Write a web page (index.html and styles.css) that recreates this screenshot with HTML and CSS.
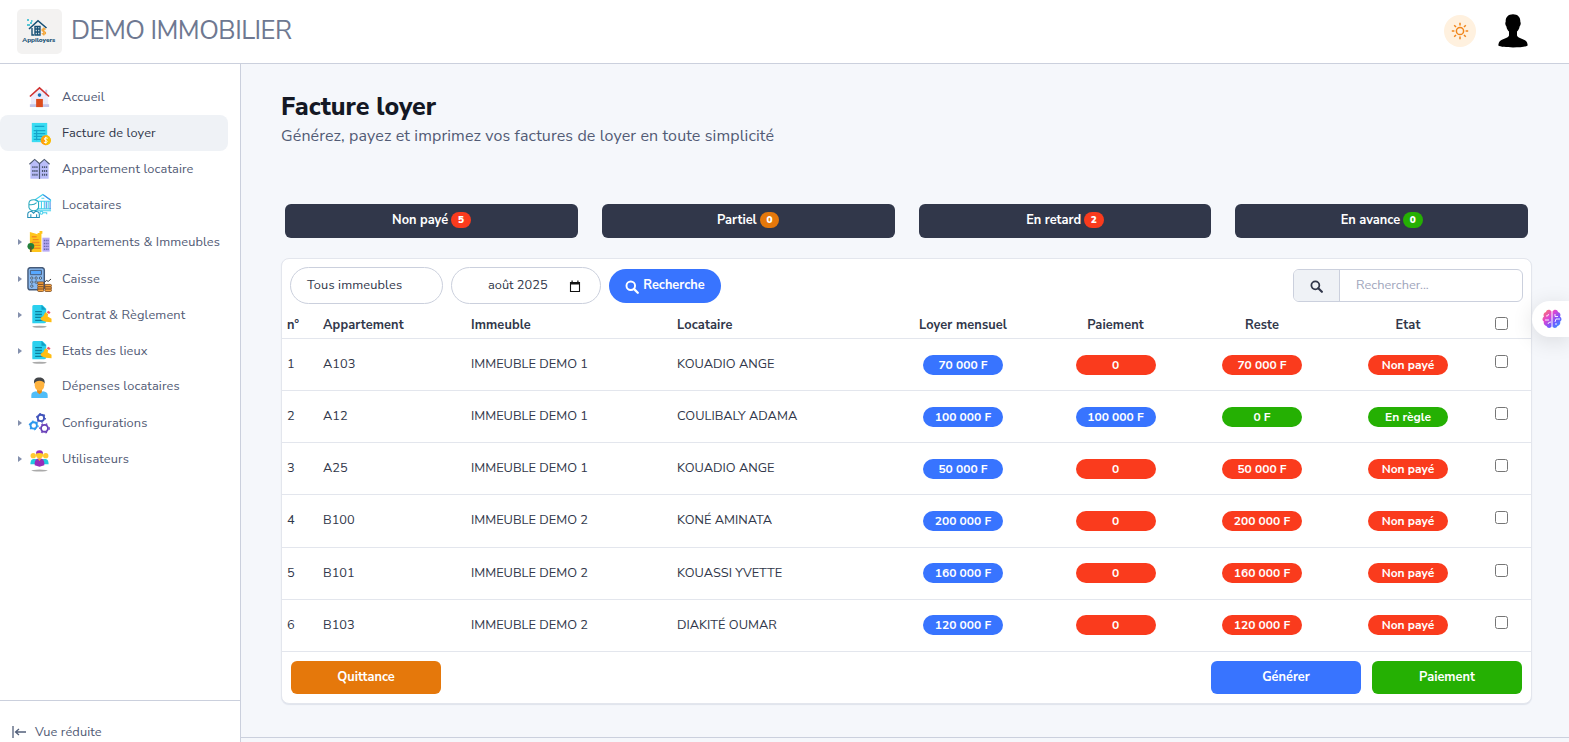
FILE: index.html
```
<!DOCTYPE html>
<html lang="fr">
<head>
<meta charset="utf-8">
<title>Facture loyer</title>
<link rel="stylesheet" href="styles.css">
</head>
<body>
<svg class="defs" width="0" height="0">
  <symbol id="search" viewBox="0 0 16 16"><circle cx="6.6" cy="6.6" r="4.9" fill="none" stroke="currentColor" stroke-width="2.2"/><path d="M10.2 10.2 14.6 14.6" stroke="currentColor" stroke-width="2.6" stroke-linecap="round"/></symbol>
  <symbol id="contract" viewBox="0 0 26 26"><ellipse cx="13" cy="24.7" rx="7.500" ry="1" fill="#aaa"/><path d="M7 2h9l4 4v13q0 2-2 2H5.500V4q0-2 1.500-2z" fill="#2bd0ee"/><path d="M15 2l5 5h-5z" fill="#139fc4"/><path d="M8.500 9h7M8.500 12h7M8.500 15h7M8.500 18h10" stroke="#0c7f9f" stroke-width="1.400"/><path d="m22 8 2.500 1.500-1.500 2-2.500-1.500z" fill="#f05268"/><path d="m19 9.500 3 2-.5 2.500 4 2.500v3.500l-6-.5-4.500-1.500-1-2.500 3-2z" fill="#ffbd13"/></symbol>
</svg>
<header class="topbar">
  <svg class="logo" viewBox="0 0 45 45"><rect width="45" height="45" rx="5" fill="#f3f2f1"/><path d="m12 20 9-8.300 8.500 7.300" fill="none" stroke="#165075" stroke-width="1.600"/><path d="M15 19v7h2m1-8.500V26h5v-8.500zM18 20h5m-5 3h5m-2.500-5.500V26" fill="none" stroke="#165075" stroke-width="1.400"/><path d="M10 11h2M14 12h1.500M10 16h3M13 14h2" stroke="#22b7cb" stroke-width="1.600"/><path d="M28.500 20.500c-.8-1.200-3.500-1-3.500.5 0 1.800 3.600 1 3.600 3 0 1.500-2.800 1.700-3.700.3M26.800 18.500v8" fill="none" stroke="#f3a02d" stroke-width="1.200"/><text x="5.300" y="33.300" class="logo-name" textLength="33">Appiloyers</text></svg>
  <span class="brand">DEMO IMMOBILIER</span>
  <button class="theme"><svg width="18" height="18" viewBox="0 0 18 18" fill="none" stroke="#f0861c" stroke-width="1.500"><circle cx="9" cy="9" r="3.600"/><path d="M9 .8v2.600M9 14.600v2.600M.8 9h2.600M14.600 9h2.600M3.200 3.200l1.800 1.800M13 13l1.800 1.800M3.200 14.800 5 13M13 5l1.800-1.800"/></svg></button>
  <svg class="avatar" viewBox="0 0 30 34"><path d="M15 .3C10 .3 7.300 3.500 7.700 8c-.8.500-.5 3 .7 4.500.4 2.500 1.500 4 2.600 5v4c-1.200 2.600-5.500 3.400-8 4.700C1 27.200.5 29.500.3 31.500 4 34 26 34 29.700 31.500c-.2-2-.7-4.300-2.700-5.300-2.500-1.300-6.800-2.100-8-4.700v-4c1.100-1 2.200-2.500 2.600-5 1.200-1.500 1.500-4 .7-4.500.4-4.500-2.300-7.700-7.300-7.700z"/></svg>
</header>
<div class="shell">
<aside class="sidebar">
  <nav class="nav">
    <a class="item"><i class="no-caret"></i><svg viewBox="0 0 26 26"><path d="M4 12 13 4l9 8v10H4z" fill="#ecebfa"/><path d="M19 5h2v6h-2zM3 20h20v3H3z" fill="#c4c4e8"/><path d="m3 12 10-9 10 9" fill="none" stroke="#cf3030" stroke-width="1.600"/><circle cx="13" cy="10.500" r="1.900" fill="#1870b8"/><path d="M9.500 14.500h7V23h-7z" fill="#dc4b1c"/></svg><span>Accueil</span></a>
    <a class="item active"><i class="no-caret"></i><svg viewBox="0 0 26 26"><path d="M5 2h16v20H5z" fill="#3bdcf2"/><path d="M8 5.500h10M7 10h12M7 13h12M7 16h9M7 19h8M10 9v11" stroke="#14a5cc" stroke-width="1.300"/><circle cx="19.500" cy="20" r="5.300" fill="#ff9e0b"/><path d="M19.500 14.700a5.300 5.300 0 0 1 0 10.600z" fill="#f8c100"/><path d="M21.500 18c-3-1.600-5 1-2 2s1 3.400-2 2M19.500 16.500v7" fill="none" stroke="#fff" stroke-width="1"/></svg><span>Facture de loyer</span></a>
    <a class="item"><i class="no-caret"></i><svg viewBox="0 0 26 26"><path d="M3.500 7 8 3l5 4 5-4 4.500 4v15.500h-19z" fill="#b9bdf9"/><path d="m2.500 7.500 5.500-5 5 4.500 5-4.500 5.500 5M13 7v16" fill="none" stroke="#4c5872" stroke-width="1.200"/><path d="M5.500 10.500H11m4.500 0H21M5.500 14.500H11m4.500 0H21M5.500 18.500H11m4.500 0H21" stroke="#4c5872" stroke-width="2" stroke-dasharray="1.300 .8"/></svg><span>Appartement locataire</span></a>
    <a class="item"><i class="no-caret"></i><svg viewBox="0 0 26 26" fill="none" stroke="#44cfec" stroke-width="1.100"><path d="m8.500 7 8-5.500 8 5.500v1.500h-14zM12 9v7m3-7v7m3-7v7m4-7v7M11 16.500h14M15 5.500h3M9 18.500h16"/><path d="M20 9v7m4-7v8M17 2l7 5" stroke="#418ce8"/><path d="M2 11q0-4 5-4t5 4v4q-1 3.500-5 3.500T2 15zM2 12q5 1 8-2" stroke="#29a9bd"/><path d="M.8 25.500V22q0-2.500 4-3l2 2 2-2q4 .5 4 3v3.500zM4 22v3m6-3v3" stroke="#238fb7"/><circle cx="15" cy="20.500" r="1.500"/><path d="M16.500 20.500h4v1.500"/></svg><span>Locataires</span></a>
    <a class="item tall"><i class="caret"></i><svg viewBox="0 0 26 26"><path d="m3 2 8 2.500V3h2V1h3v3h-1v19H3z" fill="#ffc51c"/><path d="M5 7h5M6 10h6M5 13h8M6 16h8M6 19h8" stroke="#f28c1e" stroke-width="1.400"/><path d="M16 8h7.500v14.500H16z" fill="#b7aaf3"/><path d="M17.500 11h5m-5 3h5m-5 3h5m-5 3h5" stroke="#6465ac" stroke-width="1.500" stroke-dasharray="1.200 .7"/><circle cx="4" cy="17" r="3.500" fill="#24803b"/><path d="M4 17v6" stroke="#694d28" stroke-width="1.500"/></svg><span class="wide-label">Appartements &amp; Immeubles</span></a>
    <a class="item"><i class="caret"></i><svg viewBox="0 0 26 26"><rect x="1" y=".7" width="17" height="23" rx="2.500" fill="#8abaf0" stroke="#465a78" stroke-width="1.500"/><path d="M3.500 3.500H15v4.500H3.500z" fill="#57a8ff" stroke="#465a78"/><g fill="#d7edff" stroke="#33475f" stroke-width=".9"><circle cx="5" cy="11.500" r="1.200"/><circle cx="9.500" cy="11.500" r="1.200"/><circle cx="14" cy="11.500" r="1.200"/><circle cx="5" cy="15.700" r="1.200"/><circle cx="9.500" cy="15.700" r="1.200"/><circle cx="5" cy="19.900" r="1.200"/></g><g fill="#f6a23c" stroke="#70411c" stroke-width=".8"><rect x="11" y="15.500" width="6.500" height="2.600" rx="1.200"/><rect x="11" y="18.100" width="6.500" height="2.500" rx="1.200"/><rect x="11" y="20.600" width="6.500" height="2.500" rx="1.200"/><rect x="11" y="23" width="6.500" height="2.500" rx="1.200"/><rect x="18.500" y="18.100" width="7" height="2.500" rx="1.200"/><rect x="18.500" y="20.600" width="7" height="2.500" rx="1.200"/><rect x="18.500" y="23" width="7" height="2.500" rx="1.200"/></g><path d="m18.500 15.500 2-1.500 1.500 1 3-2.500" fill="none" stroke="#333"/></svg><span>Caisse</span></a>
    <a class="item"><i class="caret"></i><svg viewBox="0 0 26 26"><use href="#contract"/></svg><span>Contrat &amp; Règlement</span></a>
    <a class="item"><i class="caret"></i><svg viewBox="0 0 26 26"><use href="#contract"/></svg><span>Etats des lieux</span></a>
    <a class="item short"><i class="no-caret"></i><svg viewBox="0 0 26 26"><path d="M4.500 24v-3q0-3.500 5-4l3.500 2 3.500-2q5 .5 5 4v3z" fill="#50bdf8"/><path d="M10.500 14h5v4L13 20l-2.500-2z" fill="#e58a12"/><path d="M8 8q0-5 5-5t5 5v3q-.5 5-5 5.500Q8.500 16 8 11z" fill="#ffb33e"/><path d="M7.500 9C6.500 4.500 9 2.500 13 2.500S19 5 18.300 9Q17 6 13 6T7.500 9z" fill="#424549"/></svg><span>Dépenses locataires</span></a>
    <a class="item tall config"><i class="caret"></i><svg viewBox="0 0 26 26" fill="none"><g stroke-width="1.900"><circle cx="14.500" cy="7.200" r="3.300" stroke="#4254bb"/><circle cx="7" cy="15" r="3.300" stroke="#2a96ee"/><circle cx="18.200" cy="18" r="3.600" stroke="#6940b8"/></g><g stroke-width="1.300" stroke-dasharray="1.700 3.080"><circle cx="14.500" cy="7.200" r="4.560" stroke="#4254bb"/><circle cx="7" cy="15" r="4.560" stroke="#2a96ee"/><circle cx="18.200" cy="18" r="4.900" stroke="#6940b8"/></g></svg><span>Configurations</span></a>
    <a class="item"><i class="caret"></i><svg viewBox="0 0 26 26"><ellipse cx="13" cy="24.500" rx="8.500" ry="1" fill="#aaa"/><circle cx="6.500" cy="9" r="2.800" fill="#ffca32"/><circle cx="19.500" cy="9" r="2.800" fill="#ffca32"/><path d="M3.500 18q0-5 3-5.500h13q3 .5 3 5.500z" fill="#23c8df"/><circle cx="13" cy="8" r="3.700" fill="#ffc928"/><path d="M9.300 7q0-3.500 3.700-3.500T16.700 7q-3.700-1.500-7.400 0z" fill="#942fc0"/><path d="M8 19v-2q0-5 5-5t5 5v2l-5 1.500z" fill="#972bb9"/><path d="m11 12 2 2.500 2-2.500z" fill="#ffad24"/></svg><span>Utilisateurs</span></a>
  </nav>
  <div class="collapse"><svg width="15" height="12" viewBox="0 0 15 12" fill="none" stroke="#53607b" stroke-width="1.300"><path d="M1 0v12M3.500 6H14M7 3 3.500 6 7 9"/></svg><span>Vue réduite</span></div>
</aside>
<main class="main">
  <h1>Facture loyer</h1>
  <p class="subtitle">Générez, payez et imprimez vos factures de loyer en toute simplicité</p>
  <section class="stats">
    <div class="stat"><span>Non payé</span><b class="red">5</b></div>
    <div class="stat"><span>Partiel</span><b class="orange">0</b></div>
    <div class="stat"><span>En retard</span><b class="red">2</b></div>
    <div class="stat"><span>En avance</span><b class="green">0</b></div>
  </section>
  <section class="card">
    <div class="filters">
      <div class="select">Tous immeubles</div>
      <div class="month"><span>août 2025</span><svg width="12" height="13" viewBox="0 0 12 13"><path d="M1.500 2.500h9v9h-9z" fill="none" stroke="#111" stroke-width="1.100"/><path d="M1 2h10v2.500H1zM2.500.5h1.200V3H2.500zm5.800 0h1.200V3H8.300z" fill="#111"/></svg></div>
      <button class="find"><svg width="14" height="14"><use href="#search"/></svg><span>Recherche</span></button>
      <div class="search"><span class="addon"><svg width="13" height="13"><use href="#search"/></svg></span><span class="placeholder">Rechercher...</span></div>
    </div>
    <div class="row head"><span>n°</span><span>Appartement</span><span>Immeuble</span><span>Locataire</span><span class="mid">Loyer mensuel</span><span class="mid">Paiement</span><span class="mid">Reste</span><span class="mid">Etat</span><input type="checkbox"></div>
    <div class="row"><span>1</span><span>A103</span><span>IMMEUBLE DEMO 1</span><span>KOUADIO ANGE</span><b class="pill blue">70 000 F</b><b class="pill red">0</b><b class="pill red">70 000 F</b><b class="pill red">Non payé</b><input type="checkbox"></div>
    <div class="row"><span>2</span><span>A12</span><span>IMMEUBLE DEMO 1</span><span>COULIBALY ADAMA</span><b class="pill blue">100 000 F</b><b class="pill blue">100 000 F</b><b class="pill green">0 F</b><b class="pill green">En règle</b><input type="checkbox"></div>
    <div class="row"><span>3</span><span>A25</span><span>IMMEUBLE DEMO 1</span><span>KOUADIO ANGE</span><b class="pill blue">50 000 F</b><b class="pill red">0</b><b class="pill red">50 000 F</b><b class="pill red">Non payé</b><input type="checkbox"></div>
    <div class="row"><span>4</span><span>B100</span><span>IMMEUBLE DEMO 2</span><span>KONÉ AMINATA</span><b class="pill blue">200 000 F</b><b class="pill red">0</b><b class="pill red">200 000 F</b><b class="pill red">Non payé</b><input type="checkbox"></div>
    <div class="row"><span>5</span><span>B101</span><span>IMMEUBLE DEMO 2</span><span>KOUASSI YVETTE</span><b class="pill blue">160 000 F</b><b class="pill red">0</b><b class="pill red">160 000 F</b><b class="pill red">Non payé</b><input type="checkbox"></div>
    <div class="row"><span>6</span><span>B103</span><span>IMMEUBLE DEMO 2</span><span>DIAKITÉ OUMAR</span><b class="pill blue">120 000 F</b><b class="pill red">0</b><b class="pill red">120 000 F</b><b class="pill red">Non payé</b><input type="checkbox"></div>
    <div class="actions"><button class="orange first">Quittance</button><button class="blue">Générer</button><button class="green">Paiement</button></div>
  </section>
  <footer class="page-end"></footer>
</main>
</div>
<div class="assistant"><svg width="20" height="20" viewBox="0 0 20 20"><defs><linearGradient id="brain" x1="0" y1="0" x2="1" y2="1"><stop offset="0" stop-color="#ff8052"/><stop offset=".35" stop-color="#e246cf"/><stop offset=".65" stop-color="#7557ff"/><stop offset="1" stop-color="#27a6ff"/></linearGradient></defs><path d="M9.500 2.500C8 0 4.500.5 4 3 1.500 3.500 1 6 2 7.500 0 9 0 11.500 1.800 12.500c-.6 2.500 1 4.300 2.700 4.500.8 2.400 4 2.600 5 .5zM10.500 2.500C12 0 15.500.5 16 3c2.500.5 3 3 2 4.500 2 1.500 2 4 .2 5 .6 2.500-1 4.300-2.700 4.500-.8 2.400-4 2.600-5 .5z" fill="url(#brain)"/><path d="M4 7q2.500.5 2.500-2M3 11h4M6 15q0-2 3-2M13 5v2.500h3M18 10h-4l-1 3M14 16v-2" fill="none" stroke="#fff" stroke-width=".9"/></svg></div>
</body>
</html>
```
FILE: styles.css
```
* { box-sizing: border-box; }
body { margin: 0; height: 742px; overflow: hidden; font-family: "Nunito Sans", Lato, sans-serif; font-size: 12.8px; color: #31374a; background: #f5f7fb; }
button { font: inherit; border: 0; padding: 0; }
.defs { display: block; position: absolute; }
.topbar { height: 64px; background: #fff; border-bottom: 1px solid #cbd0dd; display: flex; align-items: center; padding: 0 41px 0 17px; }
.logo { width: 45px; height: 45px; }
.logo-name { font-size: 6.500px; font-weight: 800; fill: #165075; }
.brand { margin: -3px auto 0 9px; font-size: 25.600px; letter-spacing: -.51px; color: #6e7891; }
.theme { width: 32px; height: 32px; margin: -1px 22px 0 0; border-radius: 50%; background: #fff1df; display: grid; place-items: center; }
.avatar { width: 30px; height: 34px; margin-top: -2px; }
.shell { display: flex; height: 678px; }
.sidebar { flex: none; width: 241px; background: #fff; border-right: 1px solid #cbd0dd; display: flex; flex-direction: column; justify-content: space-between; }
.nav { padding-top: 15px; }
.item { display: flex; align-items: center; height: 36px; width: 228px; padding-left: 18px; border-radius: 8px; color: #525b75; white-space: nowrap; letter-spacing: .12px; }
.item svg { width: 25px; height: 25px; margin: 1px 10px 0 0; }
.item.tall { height: 38px; }
.item.tall svg { margin-right: 4px; }
.item .wide-label { letter-spacing: .1px; }
.item.config { height: 37px; }
.item.config svg { margin-right: 10px; }
.item.short { height: 35px; }
.item.short span { margin-top: -1px; }
.active { background: #eff2f6; color: #31374a; }
.no-caret, .caret { width: 9px; }
.caret::before { content: ""; display: block; width: 0; border: 3.500px solid transparent; border-left: 4px solid #8490ad; border-right: 0; }
.collapse { height: 42px; border-top: 1px solid #cbd0dd; padding: 21px 0 0 12px; display: flex; align-items: center; gap: 8px; color: #525b75; letter-spacing: .1px; }
.main { flex: 1; min-width: 0; padding: 27px 37px 0 40px; display: flex; flex-direction: column; }
h1 { margin: 0; font-size: 25px; line-height: 32px; font-weight: 800; color: #141824; }
.subtitle { margin: 0; font-size: 16px; line-height: 27px; letter-spacing: .125px; color: #525b75; }
.stats { display: grid; grid-template-columns: repeat(4, 1fr); gap: 24px; margin: 54px 4px 20px 4px; }
.stat { height: 34px; border-radius: 6px; background: #31374a; color: #fff; font-weight: 700; display: flex; justify-content: center; align-items: center; gap: 3px; padding-bottom: 3px; }
.stat b { font-size: 10px; line-height: 16px; width: 19.500px; border-radius: 9px; text-align: center; }
.red { background: #fa3b1d; }
.orange { background: #e5780b; }
.green { background: #25b003; }
.blue { background: #3874ff; }
.card { height: 446px; background: #fff; border: 1px solid #e3e6ed; border-radius: 8px; box-shadow: 0 1px 1px #dfe3ec; }
.filters { height: 54px; padding: 0 8px; display: flex; align-items: center; gap: 8px; }
.select, .month { height: 37px; margin-top: -2px; border: 1px solid #cbd0dd; border-radius: 19px; display: flex; align-items: center; padding-bottom: 1px; }
.select { width: 153px; padding-left: 16px; letter-spacing: .12px; }
.month { width: 150px; padding-left: 36px; gap: 21px; }
.month svg { margin-top: 3px; }
.find { width: 112px; height: 34px; border-radius: 17px; background: #3874ff; color: #fff; font-weight: 700; display: flex; align-items: center; justify-content: center; gap: 4px; }
.find svg { margin-top: 2px; }
.find span { padding-bottom: 2px; }
.search { margin: -2px 0 0 auto; width: 230px; height: 33px; border: 1px solid #cbd0dd; border-radius: 6px; display: flex; align-items: center; overflow: hidden; color: #9fa6bc; }
.addon { width: 46px; height: 31px; background: #eff2f6; border-right: 1px solid #cbd0dd; color: #31374a; display: grid; place-items: center; margin-right: 16px; padding-top: 2px; }
.row { display: grid; grid-template-columns: 36px 148px 206px 207px 158px 147px 146px 146px 40px; height: 52.170px; padding-left: 5px; border-bottom: 1px solid #e3e6ed; align-items: center; }
.row > span { line-height: 20px; margin-top: -1.400px; }
.row input { width: 13px; height: 13px; margin: -6.200px 0 0; justify-self: center; }
.head { height: 26px; font-weight: 700; }
.row.head > span { margin-top: -1px; letter-spacing: .1px; }
.row.head input { margin-top: -5px; }
.mid { text-align: center; }
.row .pill { width: 80px; height: 20px; line-height: 20px; margin-top: 0; border-radius: 10px; color: #fff; font-size: 12px; font-weight: 700; text-align: center; justify-self: center; }
.actions { display: flex; justify-content: flex-end; gap: 11px; padding: 9px 9px 0 9px; }
.actions button { width: 150px; height: 33px; border-radius: 6px; color: #fff; font-weight: 700; padding-bottom: 1px; }
.actions .first { margin-right: auto; }
.page-end { margin: 33px -37px 0 -40px; border-top: 1px solid #cbd0dd; }
.assistant { position: absolute; right: 0; top: 301px; width: 37px; height: 36px; padding-left: 2px; background: #fff; border-radius: 18px 0 0 18px; box-shadow: 0 4px 22px rgba(0,0,0,.12); display: grid; place-items: center; }
```
